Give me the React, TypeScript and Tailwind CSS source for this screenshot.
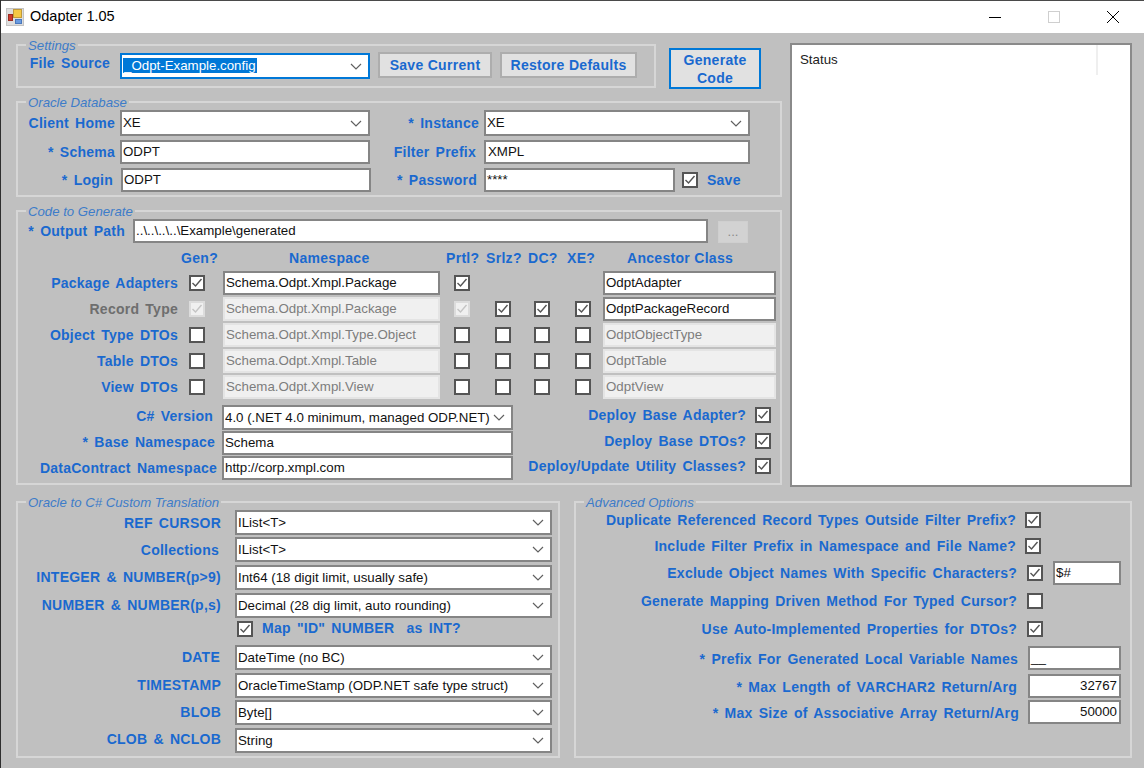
import type { ReactNode } from "react";

const FONT = "font-['Liberation_Sans',Arial,sans-serif]";

function Lbl({ className = "", children }: { className?: string; children: ReactNode }) {
  return (
    <span className={`block shrink-0 whitespace-nowrap text-right text-[14px] leading-[18px] font-bold tracking-[0.25px] [word-spacing:2px] ${className.includes("text-[#") ? "" : "text-[#1a69cf]"} ${className}`}>
      {children}
    </span>
  );
}

function Field({
  className = "",
  disabled = false,
  right = false,
  children,
}: {
  className?: string;
  disabled?: boolean;
  right?: boolean;
  children?: ReactNode;
}) {
  const tone = disabled
    ? "border-[#e4e4e4] bg-[#f0f0f0] text-[#7d7d7d]"
    : "border-[#858585] bg-white text-[#111]";
  return (
    <div className={`flex shrink-0 h-[24px] items-center overflow-hidden whitespace-nowrap border-2 pl-[1px] pr-[2px] text-[13.3px] ${right ? "justify-end" : ""} ${tone} ${className}`}>
      {children}
    </div>
  );
}

function Combo({ className = "", focused = false, children }: { className?: string; focused?: boolean; children?: ReactNode }) {
  return (
    <div className={`flex shrink-0 h-[25px] items-center justify-between overflow-hidden whitespace-nowrap border-2 bg-white pl-[1px] pr-[6px] text-[13.3px] text-[#111] ${focused ? "border-[#0078d7]" : "border-[#858585]"} ${className}`}>
      <span className="min-w-0 overflow-hidden">{children}</span>
      <svg width="12" height="7" viewBox="0 0 12 7" className="ml-[3px] shrink-0" fill="none" stroke="#606060" strokeWidth="1.2">
        <path d="M1 1l5 5 5-5" />
      </svg>
    </div>
  );
}

function Check({ on = false, disabled = false, className = "" }: { on?: boolean; disabled?: boolean; className?: string }) {
  return (
    <span className={`block h-[16px] w-[16px] shrink-0 border-2 ${disabled ? "border-[#dcdcdc] bg-[#f0f0f0]" : "border-[#555] bg-white"} ${className}`}>
      {on && (
        <svg width="12" height="12" viewBox="0 0 12 12" fill="none" stroke={disabled ? "#c4c4c4" : "#555"} strokeWidth="1.4">
          <path d="M1.5 6l3 3 6-7" />
        </svg>
      )}
    </span>
  );
}

function Button({ className = "", primary = false, children }: { className?: string; primary?: boolean; children: ReactNode }) {
  return (
    <div className={`flex shrink-0 items-center justify-center border-2 bg-[#e1e1e1] text-center text-[14px] leading-[18px] font-bold tracking-[0.3px] text-[#1a69cf] ${primary ? "border-[#0078d7]" : "border-[#adadad]"} ${className}`}>
      {children}
    </div>
  );
}

function Group({ title, className = "", children }: { title: string; className?: string; children: ReactNode }) {
  return (
    <div className={`relative shrink-0 border-2 border-[#d6d6d6] ${className}`}>
      <span className="absolute -top-[8px] left-[8px] bg-[#c0c0c0] px-[2px] text-[13.2px] leading-[15px] italic whitespace-nowrap text-[#3d7cc9]">
        {title}
      </span>
      {children}
    </div>
  );
}

function HeadCell({ className = "", children }: { className?: string; children?: ReactNode }) {
  return <div className={`h-[20px] text-[14px] leading-[18px] font-bold tracking-[0.3px] text-[#1a69cf] ${className}`}>{children}</div>;
}

const codeRows = [
  { label: "Package Adapters", ns: "Schema.Odpt.Xmpl.Package", anc: "OdptAdapter", gen: true, prtl: true, rest: null, open: true, ancOpen: true },
  { label: "Record Type", ns: "Schema.Odpt.Xmpl.Package", anc: "OdptPackageRecord", gen: true, prtl: true, rest: true, open: false, ancOpen: true },
  { label: "Object Type DTOs", ns: "Schema.Odpt.Xmpl.Type.Object", anc: "OdptObjectType", gen: false, prtl: false, rest: false, open: false, ancOpen: false },
  { label: "Table DTOs", ns: "Schema.Odpt.Xmpl.Table", anc: "OdptTable", gen: false, prtl: false, rest: false, open: false, ancOpen: false },
  { label: "View DTOs", ns: "Schema.Odpt.Xmpl.View", anc: "OdptView", gen: false, prtl: false, rest: false, open: false, ancOpen: false },
];

function TitleBar() {
  return (
    <div className="flex h-[33px] shrink-0 items-center border-t border-t-[#4a4a4a] bg-white pl-[5px]">
      <svg width="18" height="18" viewBox="0 0 18 18" className="shrink-0">
        <rect x="0.5" y="0.5" width="17" height="17" fill="#dedede" stroke="#c4c4c4" />
        <rect x="7.5" y="1.5" width="8" height="8" fill="#f5c945" stroke="#c09a3c" />
        <rect x="2.5" y="6.5" width="4" height="6" fill="#cf3a2c" stroke="#9c2a20" />
        <rect x="9.5" y="11.5" width="6" height="4" fill="#6a9be0" stroke="#4a78bc" />
      </svg>
      <span className="ml-[6px] text-[14.5px] text-black">Odapter 1.05</span>
      <div className="ml-auto flex h-full items-center">
        <svg width="14" height="14" viewBox="0 0 14 14" className="mr-[45px]" stroke="#000" fill="none">
          <path d="M1 7.5h12" />
        </svg>
        <svg width="14" height="14" viewBox="0 0 14 14" className="mr-[45px]" stroke="#cfcfcf" fill="none">
          <rect x="1.5" y="1.5" width="11" height="11" />
        </svg>
        <svg width="14" height="14" viewBox="0 0 14 14" className="mr-[24px]" stroke="#000" fill="none">
          <path d="M1 1l12 12M13 1L1 13" />
        </svg>
      </div>
    </div>
  );
}

function SettingsRow() {
  return (
    <div className="flex items-start">
      <Group title="Settings" className="h-[44px] w-[640px]">
        <div className="flex items-start pt-[7px]">
          <Lbl className="mt-[1px] w-[92px]">File Source</Lbl>
          <Combo focused className="ml-[10px] h-[26px] w-[250px]">
            <span className="bg-[#0078d7] px-[1px] text-white">_Odpt-Example.config</span>
          </Combo>
          <Button className="ml-[8px] -mt-[1px] h-[26px] w-[114px]">Save Current</Button>
          <Button className="ml-[8px] -mt-[1px] h-[26px] w-[137px]">Restore Defaults</Button>
        </div>
      </Group>
      <Button primary className="ml-[13px] mt-[4px] h-[41px] w-[92px]">
        Generate
        <br />
        Code
      </Button>
    </div>
  );
}

function OracleGroup() {
  return (
    <Group title="Oracle Database" className="mt-[12px] h-[96px]">
      <div className="flex items-center pt-[7px]">
        <Lbl className="w-[97px]">Client Home</Lbl>
        <Combo className="ml-[5px] h-[26px] w-[250px]">XE</Combo>
        <Lbl className="w-[109px]">* Instance</Lbl>
        <Combo className="ml-[5px] h-[26px] w-[266px]">XE</Combo>
      </div>
      <div className="mt-[4px] flex items-center">
        <Lbl className="w-[97px]">* Schema</Lbl>
        <Field className="ml-[5px] w-[250px]">ODPT</Field>
        <Lbl className="w-[106px]">Filter Prefix</Lbl>
        <Field className="ml-[8px] w-[266px] pl-[2px]">XMPL</Field>
      </div>
      <div className="mt-[4px] flex items-center">
        <Lbl className="w-[95px]">* Login</Lbl>
        <Field className="ml-[8px] w-[250px]">ODPT</Field>
        <Lbl className="w-[106px]">* Password</Lbl>
        <Field className="ml-[7px] w-[191px]">****</Field>
        <Check on className="ml-[7px]" />
        <Lbl className="ml-[9px]">Save</Lbl>
      </div>
    </Group>
  );
}

function CodeGroup() {
  return (
    <Group title="Code to Generate" className="mt-[13px] h-[275px]">
      <div className="flex items-start pt-[7px]">
        <Lbl className="mt-[3px] w-[107px]">* Output Path</Lbl>
        <Field className="ml-[8px] w-[575px]">..\..\..\..\Example\generated</Field>
        <div className="ml-[10px] mt-[2px] flex h-[22px] w-[30px] items-center justify-center border border-[#cfcfcf] bg-[#d2d2d2] text-[13px] text-[#8a8a8a]">
          ...
        </div>
      </div>
      <div className="mt-[6px] grid grid-cols-[160px_45px_223px_37px_40px_40px_40px_173px] items-center gap-y-[2px]">
        <HeadCell />
        <HeadCell className="pl-[3px]">Gen?</HeadCell>
        <HeadCell className="pl-[66px]">Namespace</HeadCell>
        <HeadCell>Prtl?</HeadCell>
        <HeadCell className="pl-[3px]">Srlz?</HeadCell>
        <HeadCell className="pl-[5px]">DC?</HeadCell>
        <HeadCell className="pl-[4px]">XE?</HeadCell>
        <HeadCell className="pl-[24px]">Ancestor Class</HeadCell>
        {codeRows.map((r) => (
          <div key={r.label} className="contents">
            <Lbl className={r.label === "Record Type" ? "text-[#6e6e6e]" : ""}>{r.label}</Lbl>
            <Check on={r.gen} disabled={r.label === "Record Type"} className="ml-[11px]" />
            <Field disabled={!r.open} className="w-[217px]">{r.ns}</Field>
            <Check on={r.prtl} disabled={r.label === "Record Type"} className="ml-[8px]" />
            {r.rest === null ? <span /> : <Check on={r.rest} className="ml-[12px]" />}
            {r.rest === null ? <span /> : <Check on={r.rest} className="ml-[11px]" />}
            {r.rest === null ? <span /> : <Check on={r.rest} className="ml-[12px]" />}
            <Field disabled={!r.ancOpen} className="w-[173px]">{r.anc}</Field>
          </div>
        ))}
      </div>
      <div className="mt-[6px] flex">
        <div className="w-[495px]">
          <div className="flex items-center">
            <Lbl className="-mt-[3px] w-[195px]">C# Version</Lbl>
            <Combo className="ml-[9px] w-[291px]">4.0 (.NET 4.0 minimum, managed ODP.NET)</Combo>
          </div>
          <div className="mt-[1px] flex items-center">
            <Lbl className="-mt-[2px] w-[197px]">* Base Namespace</Lbl>
            <Field className="ml-[7px] w-[291px]">Schema</Field>
          </div>
          <div className="mt-[1px] flex items-center">
            <Lbl className="w-[199px]">DataContract Namespace</Lbl>
            <Field className="ml-[5px] w-[291px]">http://corp.xmpl.com</Field>
          </div>
        </div>
        <div className="pt-[1px]">
          <div className="flex items-center">
            <Lbl className="w-[233px]">Deploy Base Adapter?</Lbl>
            <Check on className="ml-[9px]" />
          </div>
          <div className="mt-[8px] flex items-center">
            <Lbl className="w-[233px]">Deploy Base DTOs?</Lbl>
            <Check on className="ml-[9px]" />
          </div>
          <div className="mt-[7px] flex items-center">
            <Lbl className="w-[233px]">Deploy/Update Utility Classes?</Lbl>
            <Check on className="ml-[9px]" />
          </div>
        </div>
      </div>
    </Group>
  );
}

function StatusPanel() {
  return (
    <div className="ml-[8px] h-[444px] w-[342px] shrink-0 border-2 border-[#8a8a8a] bg-white">
      <div className="h-[30px] w-[306px] border-r-2 border-r-[#efefef] pl-[8px] pt-[6px] text-[13.3px] leading-[18px] text-[#222]">
        Status
      </div>
    </div>
  );
}

function TranslationGroup() {
  return (
    <Group title="Oracle to C# Custom Translation" className="h-[257px] w-[544px]">
      <div className="flex items-center pt-[7px]">
        <Lbl className="w-[203px]">REF CURSOR</Lbl>
        <Combo className="ml-[14px] w-[317px]">IList&lt;T&gt;</Combo>
      </div>
      <div className="mt-[2px] flex items-center">
        <Lbl className="w-[201px]">Collections</Lbl>
        <Combo className="ml-[16px] w-[317px]">IList&lt;T&gt;</Combo>
      </div>
      <div className="mt-[3px] flex items-center">
        <Lbl className="-mt-[2px] w-[203px]">INTEGER &amp; NUMBER(p&gt;9)</Lbl>
        <Combo className="ml-[14px] w-[317px]">Int64 (18 digit limit, usually safe)</Combo>
      </div>
      <div className="mt-[3px] flex items-center">
        <Lbl className="-mt-[2px] w-[203px]">NUMBER &amp; NUMBER(p,s)</Lbl>
        <Combo className="ml-[14px] w-[317px]">Decimal (28 dig limit, auto rounding)</Combo>
      </div>
      <div className="mt-[2px] flex items-center">
        <Check on className="ml-[219px]" />
        <Lbl className="ml-[9px] -mt-[1px] tracking-[0.4px]">Map "ID" NUMBER&nbsp; as INT?</Lbl>
      </div>
      <div className="mt-[8px] flex items-center">
        <Lbl className="-mt-[2px] w-[202px]">DATE</Lbl>
        <Combo className="ml-[15px] w-[317px]">DateTime (no BC)</Combo>
      </div>
      <div className="mt-[3px] flex items-center">
        <Lbl className="-mt-[2px] w-[203px]">TIMESTAMP</Lbl>
        <Combo className="ml-[14px] w-[317px]">OracleTimeStamp (ODP.NET safe type struct)</Combo>
      </div>
      <div className="mt-[2px] flex items-center">
        <Lbl className="-mt-[2px] w-[203px]">BLOB</Lbl>
        <Combo className="ml-[14px] w-[317px]">Byte[]</Combo>
      </div>
      <div className="mt-[3px] flex items-center">
        <Lbl className="-mt-[4px] w-[203px]">CLOB &amp; NCLOB</Lbl>
        <Combo className="ml-[14px] w-[317px]">String</Combo>
      </div>
    </Group>
  );
}

function AdvancedGroup() {
  return (
    <Group title="Advanced Options" className="ml-[14px] h-[257px] w-[558px]">
      <div className="mt-[5px] flex h-[24px] items-center">
        <Lbl className="w-[440px]">Duplicate Referenced Record Types Outside Filter Prefix?</Lbl>
        <Check on className="ml-[9px]" />
      </div>
      <div className="mt-[2px] flex h-[24px] items-center">
        <Lbl className="w-[440px]">Include Filter Prefix in Namespace and File Name?</Lbl>
        <Check on className="ml-[9px]" />
      </div>
      <div className="mt-[3px] flex h-[24px] items-center">
        <Lbl className="w-[441px]">Exclude Object Names With Specific Characters?</Lbl>
        <Check on className="ml-[10px]" />
        <Field className="ml-[10px] w-[68px]">$#</Field>
      </div>
      <div className="mt-[4px] flex h-[24px] items-center">
        <Lbl className="w-[441px]">Generate Mapping Driven Method For Typed Cursor?</Lbl>
        <Check className="ml-[10px]" />
      </div>
      <div className="mt-[4px] flex h-[24px] items-center">
        <Lbl className="w-[441px]">Use Auto-Implemented Properties for DTOs?</Lbl>
        <Check on className="ml-[10px]" />
      </div>
      <div className="mt-[5px] flex items-center">
        <Lbl className="mt-[2px] w-[442px]">* Prefix For Generated Local Variable Names</Lbl>
        <Field className="ml-[10px] w-[93px]">__</Field>
      </div>
      <div className="mt-[4px] flex items-center">
        <Lbl className="mt-[2px] w-[441px]">* Max Length of VARCHAR2 Return/Arg</Lbl>
        <Field right className="ml-[11px] w-[93px]">32767</Field>
      </div>
      <div className="mt-[2px] flex items-center">
        <Lbl className="mt-[2px] w-[443px]">* Max Size of Associative Array Return/Arg</Lbl>
        <Field right className="ml-[9px] w-[93px]">50000</Field>
      </div>
    </Group>
  );
}

export default function App() {
  return (
    <div className={`flex h-[768px] w-[1144px] flex-col overflow-hidden border-l border-l-[#2e2e2e] bg-[#c0c0c0] ${FONT}`}>
      <TitleBar />
      <div className="pl-[15px] pt-[10px]">
        <div className="flex items-start">
          <div className="mt-[1px] w-[766px] shrink-0">
            <SettingsRow />
            <OracleGroup />
            <CodeGroup />
          </div>
          <StatusPanel />
        </div>
        <div className="mt-[14px] flex">
          <TranslationGroup />
          <AdvancedGroup />
        </div>
      </div>
    </div>
  );
}
